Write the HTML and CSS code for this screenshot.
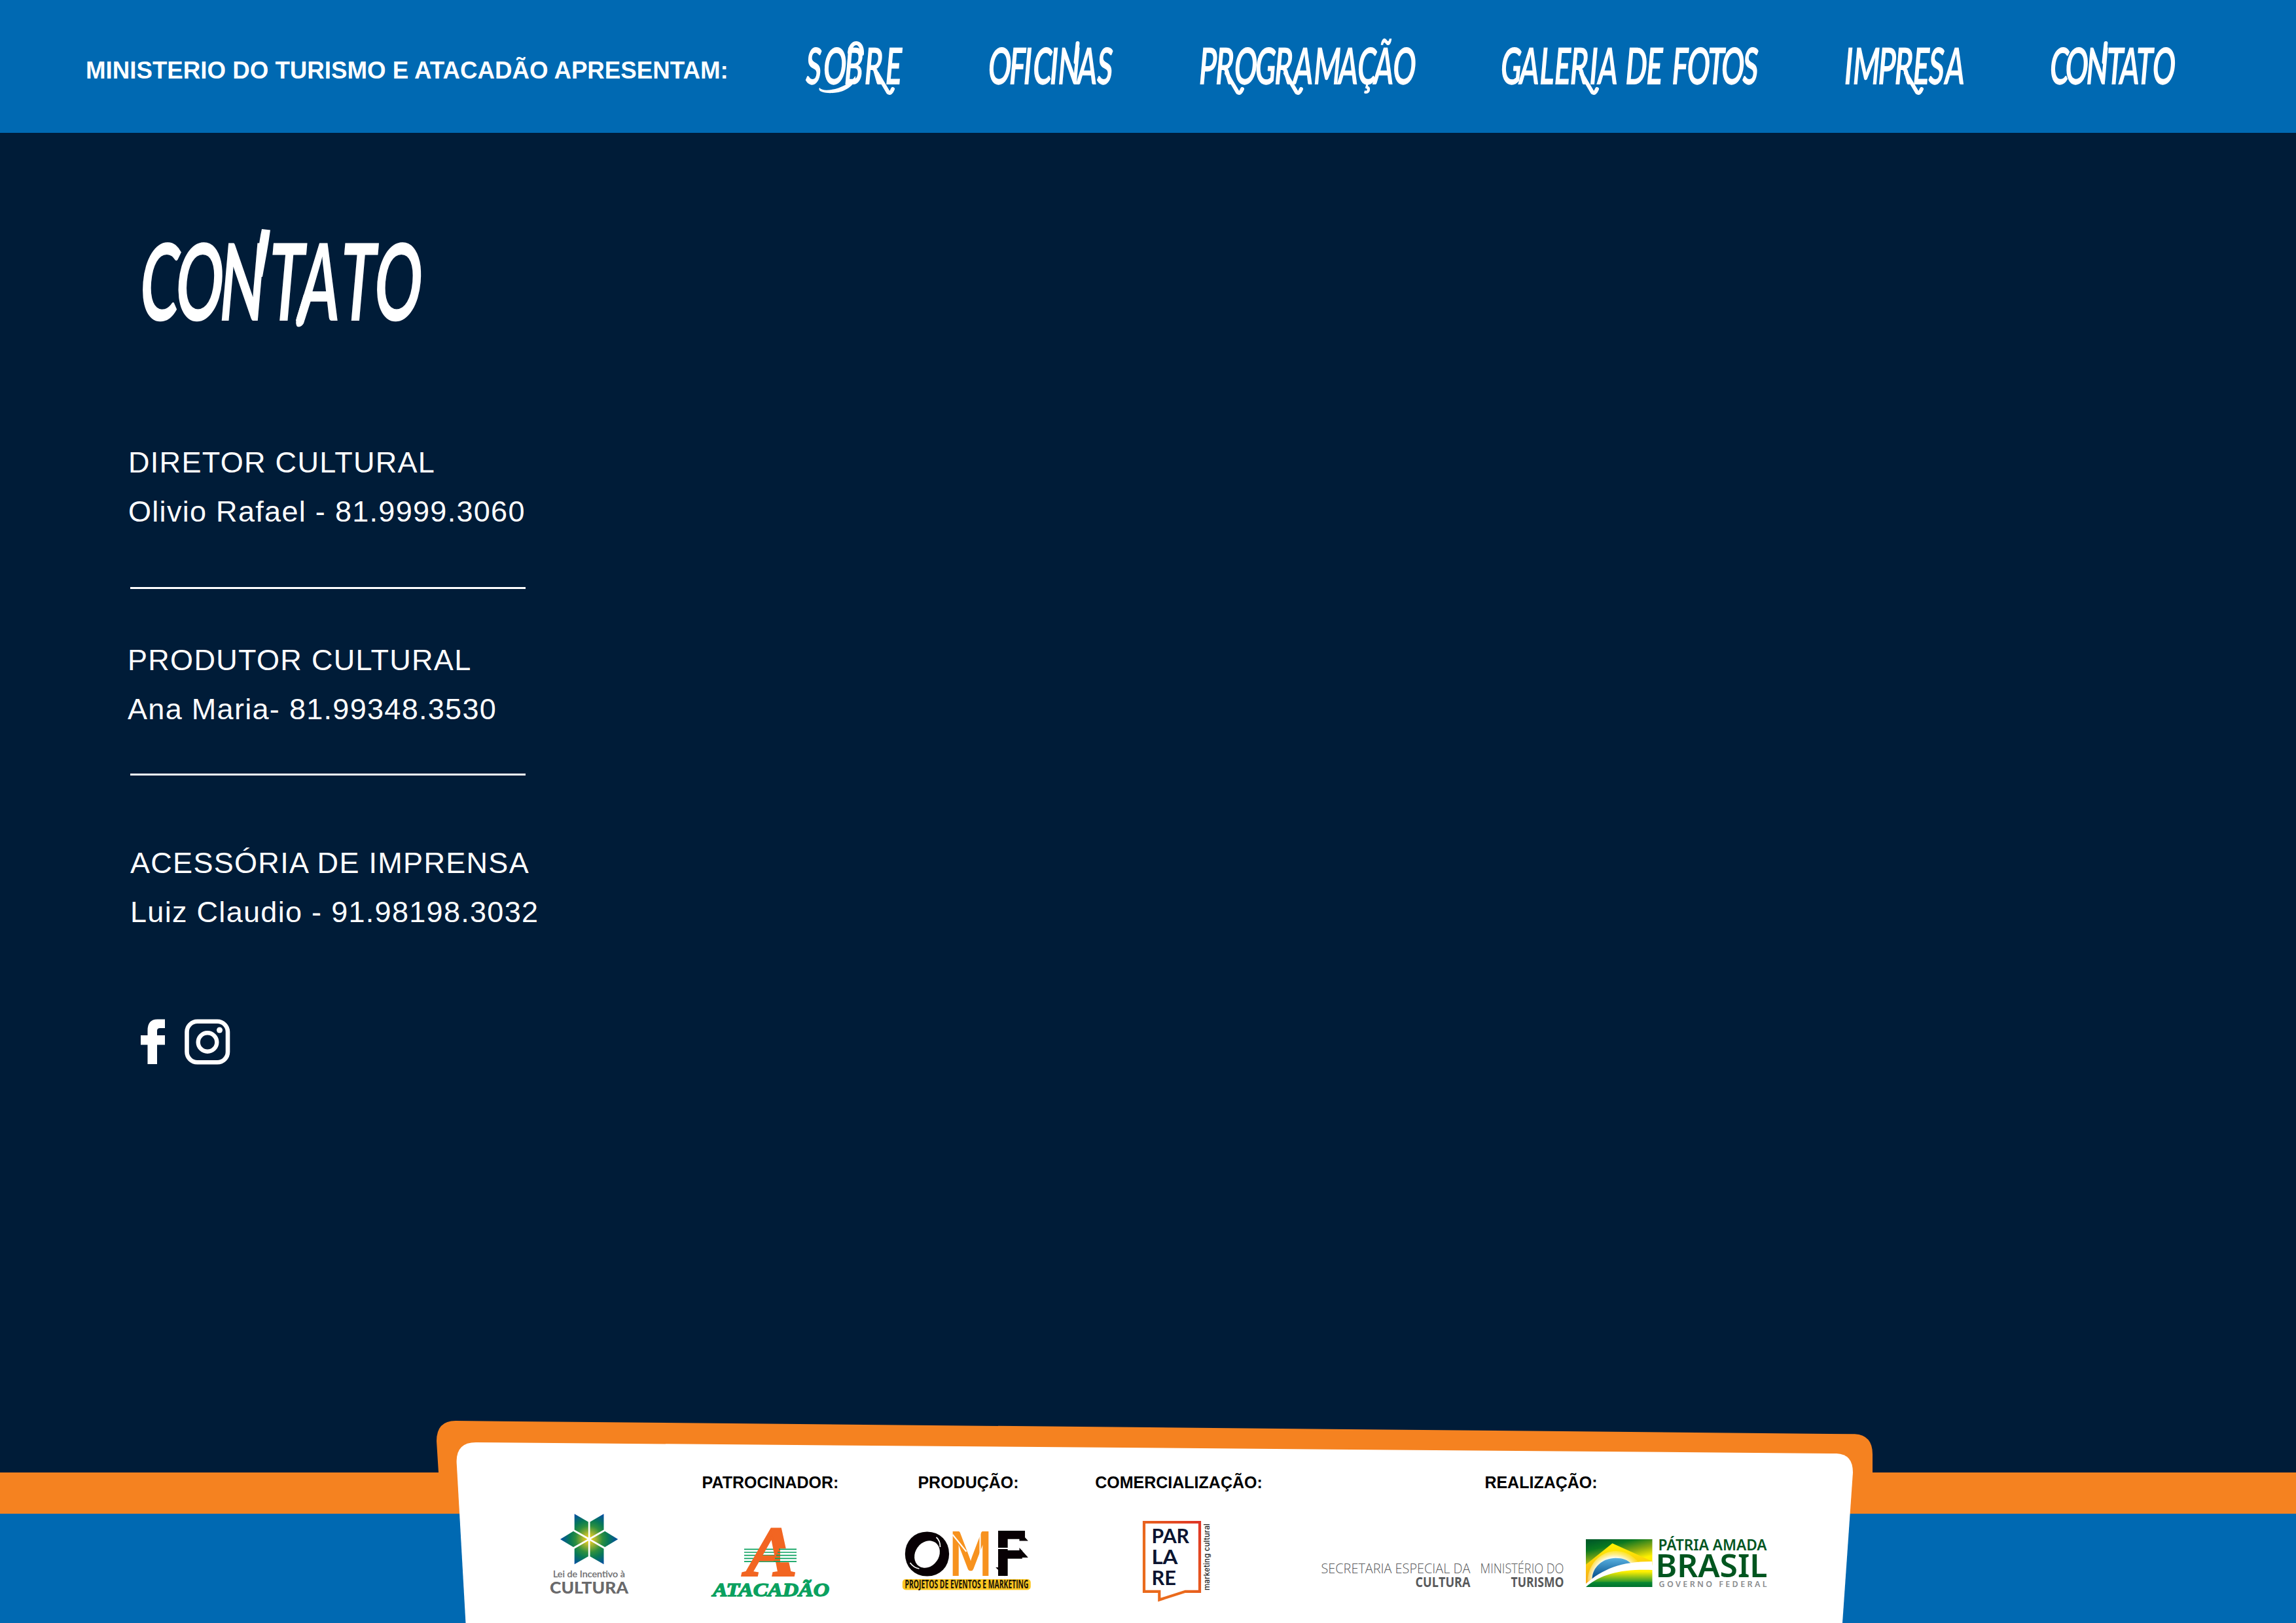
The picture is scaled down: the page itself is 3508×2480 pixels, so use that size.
FILE: index.html
```html
<!DOCTYPE html>
<html lang="pt-BR">
<head>
<meta charset="utf-8">
<title>Contato</title>
<link rel="stylesheet" href="styles.css">
</head>
<body>
<header class="topbar">
  <p class="presenters">MINISTERIO DO TURISMO E ATACADÃO APRESENTAM:</p>
  <nav class="menu">
    <a><svg width="147" height="203" viewBox="0 0 147 203">
      <defs>
        <path id="tail" d="M19 112l17 29q4 3 7-5"/>
        <path id="rise" d="M29 66L26 95"/>
      </defs>
      <text class="brush" transform="translate(-3 129) skewX(-5) scale(.56 1)" x="4 52 109 164 221" y="0">SOBRE</text>
      <path class="swash" d="M22 134c4 5 14 4 24 2c14-4 24-10 31-20c1 11-10 21-26 25c-16 3-33 0-29-7z"/>
      <path class="flick" d="M68 80C70 61 88 61 87 82"/>
      <use class="flick" href="#tail" x="91"/></svg></a>
    <a><svg width="190" height="203" viewBox="0 0 190 203"><text class="brush" transform="translate(-2 129) skewX(-5) scale(.56 1)" x="0 57 96 122 168 190 243 297" y="0">OFICINAS</text><use class="flick" href="#rise" x="107.500"/></svg></a>
    <a><svg width="326" height="203" viewBox="0 0 326 203"><text class="brush" transform="translate(-3 129) skewX(-5) scale(.56 1)" x="0 45 96 153 206 257 313 380 432 477 529" y="0">PROGRAMAÇÃO</text><use class="flick" href="#tail" x="22"/><use class="flick" href="#tail" x="112"/></svg></a>
    <a><svg width="393" height="203" viewBox="0 0 393 203"><text class="brush" transform="translate(-1 129) skewX(-5) scale(.56 1)" x="0 51 106 146 189 242 265 320 340 397 450 467 508 564 602 660" y="0">GALERIA DE FOTOS</text><use class="flick" href="#tail" x="105"/></svg></a>
    <a><svg width="182" height="203" viewBox="0 0 182 203"><text class="brush" transform="translate(-2 129) skewX(-5) scale(.56 1)" x="0 23 92 137 187 230 274" y="0">IMPRESA</text><use class="flick" href="#tail" x="75"/></svg></a>
    <a><svg width="189" height="203" viewBox="0 0 189 203"><text class="brush" transform="translate(-3 129) skewX(-5) scale(.56 1)" x="0 42 99 154 190 235 280" y="0">CONTATO</text><use class="flick" href="#rise" x="55.500"/></svg></a>
  </nav>
</header>

<main class="contact">
  <h1 class="title"><svg width="424" height="200" viewBox="0 0 424 200">
    <text class="brush brush-title" transform="translate(-8 170) skewX(-5) scale(.55 1)" x="0 99 221 357 441 556 651" y="0">CONTATO</text>
    <path class="swash" d="M182 30L195 31.500C192 55 187 80 183 103L172 103C175 80 177 52 182 30z"/>
    <path class="swash" d="M246 130L260 130L246 174Q242 181 236 179Q233 175 235 166z"/>
  </svg></h1>
  <section class="person first">
    <p>DIRETOR CULTURAL</p>
    <p>Olivio Rafael - 81.9999.3060</p>
  </section>
  <section class="person second">
    <p>PRODUTOR CULTURAL</p>
    <p>Ana Maria- 81.99348.3530</p>
  </section>
  <section class="person third">
    <p>ACESSÓRIA DE IMPRENSA</p>
    <p>Luiz Claudio - 91.98198.3032</p>
  </section>
  <div class="social">
    <svg width="37" height="70" viewBox="0 0 37 70"><path fill="#fff" d="M37 0.5V14H29.500q-4.500 0-4.500 4V25H37V39.500H25V69H10.500V39.500H0V25H10.500V17.500Q10.500 0.500 25.500 0.500z"/></svg>
    <svg width="70" height="70" viewBox="0 0 70 70"><rect x="3.500" y="3.800" width="62.500" height="62.500" rx="16" fill="none" stroke="#fff" stroke-width="6.600"/><circle cx="35" cy="35.500" r="14.300" fill="none" stroke="#fff" stroke-width="6.400"/><circle cx="53.500" cy="17" r="4.500" fill="#fff"/></svg>
  </div>
</main>

<footer class="sponsors">
  <svg class="panel" width="3508" height="309" viewBox="0 2171 3508 309">
    <path fill="#f58220" d="M0 2250H670L667 2202Q667 2171 696 2171L2834 2191.300Q2861 2193 2861 2222V2250H3508V2313H0z"/>
    <path fill="#0069b2" d="M0 2313H3508V2480H0z"/>
    <path fill="#fff" d="M711.500 2480L697.600 2234Q697 2204 727 2204L2806 2221Q2831 2222 2831 2250L2815 2480z"/>
  </svg>
  <div class="columns">
    <div class="sponsor">
      <h2></h2>
      <svg width="140" height="160" viewBox="830 2300 140 160">
        <defs><radialGradient id="star" gradientUnits="userSpaceOnUse" cx="900" cy="2352" r="43"><stop offset="0" stop-color="#ffdc00"/><stop offset=".2" stop-color="#b5b92f"/><stop offset=".48" stop-color="#2d8f3f"/><stop offset=".68" stop-color="#087a55"/><stop offset="1" stop-color="#034ea2"/></radialGradient></defs>
        <g fill="url(#star)">
          <path d="M877.700 2313.300L898.800 2325.500V2349.600L877.700 2337.500z"/>
          <path d="M922.500 2313.300L901.500 2325.500V2349.600L922.500 2337.500z"/>
          <path d="M877.700 2390.300L898.800 2378.300V2354.200L877.700 2366.500z"/>
          <path d="M922.500 2390.300L901.500 2378.300V2354.200L922.500 2366.500z"/>
          <path d="M856 2352L876 2339.700L897.500 2352L876 2364z"/>
          <path d="M944.200 2352L924.200 2339.700L902.700 2352L924.200 2364z"/>
        </g>
        <text class="lei" x="845" y="2410" textLength="110" lengthAdjust="spacingAndGlyphs">Lei de Incentivo à</text>
        <text class="lei-cultura" x="840" y="2434.500" textLength="120" lengthAdjust="spacingAndGlyphs">CULTURA</text>
      </svg>
    </div>
    <div class="sponsor">
      <h2>PATROCINADOR:</h2>
      <svg width="190" height="160" viewBox="1082 2300 190 160">
        <path d="M1137 2367.300h80M1137 2372h80M1137 2376.700h80M1137 2381.400h80M1137 2386.200h80" stroke="#0aa15f" stroke-width="1.700"/>
        <text class="atacadao-a" x="1140" y="2407.500" textLength="78" lengthAdjust="spacingAndGlyphs">A</text>
        <path d="M1192 2366.300h26v21h-26z" fill="#fff"/>
        <path d="M1190 2367.300h27M1188 2372h29M1186 2376.700h31M1184 2381.400h33M1182 2386.200h35" stroke="#0aa15f" stroke-width="1.700"/>
        <text class="atacadao" x="1089" y="2438.500" textLength="178" lengthAdjust="spacingAndGlyphs">ATACADÃO</text>
      </svg>
    </div>
    <div class="sponsor">
      <h2>PRODUÇÃO:</h2>
      <svg width="210" height="160" viewBox="1374.500 2300 210 160">
        <text class="omf omf-o" x="1382.500" y="2405" textLength="67" lengthAdjust="spacingAndGlyphs">O</text>
        <ellipse cx="1416" cy="2375" rx="18" ry="22" transform="rotate(35 1416 2375)" fill="#fff"/>
        <path d="M1430 2349q6 5 6 15M1390 2388q6 8 14 9" fill="none" stroke="#fff" stroke-width="1.700"/>
        <text class="omf omf-m" x="1450" y="2408" textLength="65" lengthAdjust="spacingAndGlyphs">M</text>
        <path d="M1455 2345L1476 2371M1497 2340V2408" stroke="#fff" stroke-width="2"/>
        <text class="omf omf-f" x="1519" y="2407" textLength="48" lengthAdjust="spacingAndGlyphs">F</text>
        <path d="M1522 2366h48" stroke="#fff" stroke-width="2"/>
        <path d="M1557 2340l13.400 14.500h-13.400zM1557 2365l13.400 15h-13.400zM1520.700 2395l14 13.500v-13.500z" fill="#080004"/>
        <rect x="1378.300" y="2413" width="196" height="16.500" rx="5" fill="#fdc722"/>
        <text class="omf-tag" x="1382" y="2427" textLength="189" lengthAdjust="spacingAndGlyphs">PROJETOS DE EVENTOS E MARKETING</text>
      </svg>
    </div>
    <div class="sponsor">
      <h2>COMERCIALIZAÇÃO:</h2>
      <svg width="120" height="160" viewBox="1741 2300 120 160">
        <defs><linearGradient id="frame" x1="0" y1="1" x2="1" y2="0"><stop offset=".4" stop-color="#ea6a1c"/><stop offset="1" stop-color="#df3526"/></linearGradient></defs>
        <path d="M1748 2326H1833V2431.800H1811L1771.300 2444.500V2431.800H1748z" fill="none" stroke="url(#frame)" stroke-width="4.200"/>
        <text class="parlare" x="1759.500" y="2358" textLength="57.500" lengthAdjust="spacingAndGlyphs">PAR</text>
        <text class="parlare" x="1759.500" y="2390" textLength="40" lengthAdjust="spacingAndGlyphs">LA</text>
        <text class="parlare" x="1759.500" y="2422" textLength="37.500" lengthAdjust="spacingAndGlyphs">RE</text>
        <text class="parlare-tag" transform="translate(1847.500 2430) rotate(-90)" textLength="102" lengthAdjust="spacing">marketing cultural</text>
      </svg>
    </div>
    <div class="sponsor">
      <h2>REALIZAÇÃO:</h2>
      <svg width="690" height="160" viewBox="2009.500 2300 690 160">
        <defs>
          <linearGradient id="field" gradientUnits="userSpaceOnUse" x1="2468" y1="2346" x2="2478" y2="2388"><stop offset="0" stop-color="#005c28"/><stop offset=".3" stop-color="#0a7820"/><stop offset=".65" stop-color="#86a812"/><stop offset="1" stop-color="#fff000"/></linearGradient>
          <linearGradient id="grass" x1="0" y1="0" x2="0" y2="1"><stop offset=".1" stop-color="#fff000"/><stop offset=".7" stop-color="#2f9a2c"/><stop offset=".72" stop-color="#0b8a33"/><stop offset="1" stop-color="#00722f"/></linearGradient>
          <linearGradient id="diamond" x1="0" y1="0" x2="0" y2="1"><stop offset="0" stop-color="#fff200"/><stop offset="1" stop-color="#f7a81b"/></linearGradient>
          <radialGradient id="glow" gradientUnits="userSpaceOnUse" cx="2466" cy="2412" r="43"><stop offset=".72" stop-color="#fff"/><stop offset="1" stop-color="#fff2a0" stop-opacity=".25"/></radialGradient>
          <linearGradient id="globe" x1="0" y1="0" x2="0" y2="1"><stop offset="0" stop-color="#58b0e0"/><stop offset="1" stop-color="#004a86"/></linearGradient>
        </defs>
        <text class="gov-light" x="2018" y="2404" textLength="228" lengthAdjust="spacingAndGlyphs">SECRETARIA ESPECIAL DA</text>
        <text class="gov-bold" x="2162" y="2425" textLength="84" lengthAdjust="spacingAndGlyphs">CULTURA</text>
        <text class="gov-light" x="2261" y="2404" textLength="128" lengthAdjust="spacingAndGlyphs">MINISTÉRIO DO</text>
        <text class="gov-bold" x="2308" y="2425" textLength="81" lengthAdjust="spacingAndGlyphs">TURISMO</text>
        <path fill="url(#field)" d="M2422.500 2352h101.500v40h-101.500z"/>
        <path fill="url(#diamond)" d="M2422.500 2390.700L2463 2358.300L2524 2385.700V2390L2422.500 2421z"/>
        <path fill="url(#glow)" d="M2425 2417C2426 2385 2450 2370 2468 2370C2485 2370 2496 2379 2503 2387.500L2440 2408z"/>
        <path fill="url(#globe)" d="M2432 2413C2432 2395 2448 2380.700 2468 2380.700C2480 2380.700 2486 2384 2491 2388.500L2478 2400L2440 2412z"/>
        <path fill="#fff" d="M2422.500 2420C2448 2397 2478 2385.500 2524 2385.900V2399.500C2480 2398 2448 2405 2422.500 2425z"/>
        <path fill="url(#grass)" d="M2422.500 2425C2446 2405 2476 2397.500 2524 2399V2425z"/>
        <text class="patria" x="2533" y="2369" textLength="166" lengthAdjust="spacingAndGlyphs">PÁTRIA AMADA</text>
        <text class="brasil" x="2529" y="2409.700" textLength="171" lengthAdjust="spacingAndGlyphs">BRASIL</text>
        <text class="governo" x="2534" y="2425" textLength="165" lengthAdjust="spacing">GOVERNO FEDERAL</text>
      </svg>
    </div>
  </div>
</footer>
</body>
</html>
```
FILE: styles.css
```css
* { box-sizing: border-box; margin: 0; padding: 0; }
body {
  width: 3508px;
  height: 2480px;
  display: flex;
  flex-direction: column;
  overflow: hidden;
  background: #001c38;
  color: #fff;
  font-family: "Liberation Sans", Arial, sans-serif;
}
svg { display: block; overflow: visible; }

.topbar {
  height: 203px;
  flex: none;
  display: flex;
  align-items: center;
  justify-content: space-between;
  padding: 0 186px 0 131px;
  background: #0069b2;
}
.presenters { padding-top: 13px; font-size: 36.700px; font-weight: 700; white-space: nowrap; }
.menu { display: flex; gap: 133px; }

.brush { font-family: Lato, sans-serif; font-weight: 700; font-size: 78px; fill: #fff; }
.brush-title { font-size: 164px; }
.swash { fill: #fff; }
.flick { fill: none; stroke: #fff; stroke-width: 6px; stroke-linecap: round; stroke-linejoin: round; }

.contact { flex: 1; padding: 117px 0 0 195px; }
.title { padding-left: 23px; height: 349px; }
.person { font-size: 45px; line-height: 75px; letter-spacing: 1.3px; white-space: nowrap; }
.person.first { padding-left: 1px; }
.person.second, .person.third { position: relative; }
.person.second { margin-top: 152px; }
.person.third { margin-top: 160px; padding-left: 4px; }
.person.second::before, .person.third::before {
  content: "";
  position: absolute;
  left: 4px;
  width: 604px;
  height: 3px;
  background: #fff;
}
.person.second::before { top: -74px; }
.person.third::before { top: -99px; }
.social { display: flex; gap: 30px; margin: 126px 0 0 20px; }

.sponsors { position: relative; height: 309px; flex: none; }
.panel { position: absolute; inset: 0; }
.columns {
  position: relative;
  display: grid;
  grid-template-columns: 200px 354px 251px 392px 715px;
  padding: 79px 0 0 800px;
}
.sponsor { display: flex; flex-direction: column; align-items: center; gap: 20px; }
.sponsor h2 { height: 30px; line-height: 30px; font-size: 25px; color: #000; white-space: nowrap; }

.lei { font: 400 13.500px Lato, sans-serif; fill: #6c6c6e; stroke: #6c6c6e; stroke-width: .3px; }
.lei-cultura { font: 900 25.500px Lato, sans-serif; fill: #69696b; }
.atacadao-a { font: italic 700 109px "Liberation Serif", serif; fill: #f26522; stroke: #f26522; stroke-width: 3px; }
.atacadao { font: italic 700 30px "Liberation Serif", serif; fill: #0aa15f; stroke: #0aa15f; stroke-width: 1.500px; }
.omf { font: 900 93px Lato, sans-serif; fill: #080004; }
.omf-o { font-size: 84px; stroke: #080004; stroke-width: 6px; }
.omf-m { fill: #f7921e; }
.omf-f { font-size: 91px; stroke: #080004; stroke-width: 2px; }
.omf-tag { font: 700 17px "Open Sans", sans-serif; fill: #1a1408; }
.parlare { font: 700 30.500px Lato, sans-serif; fill: #0b1430; }
.parlare-tag { font: 500 11.500px Inter, sans-serif; fill: #222; }
.gov-light { font: 300 20.500px "Open Sans", sans-serif; fill: #58595b; }
.gov-bold { font: 700 20.500px "Open Sans", sans-serif; fill: #58595b; }
.patria { font: 600 24px "Noto Sans", sans-serif; fill: #00551f; }
.brasil { font: 600 49px "Noto Sans", sans-serif; fill: #00551f; }
.governo { font: 600 12.500px "Noto Sans", sans-serif; fill: #8a8c8e; }
```
